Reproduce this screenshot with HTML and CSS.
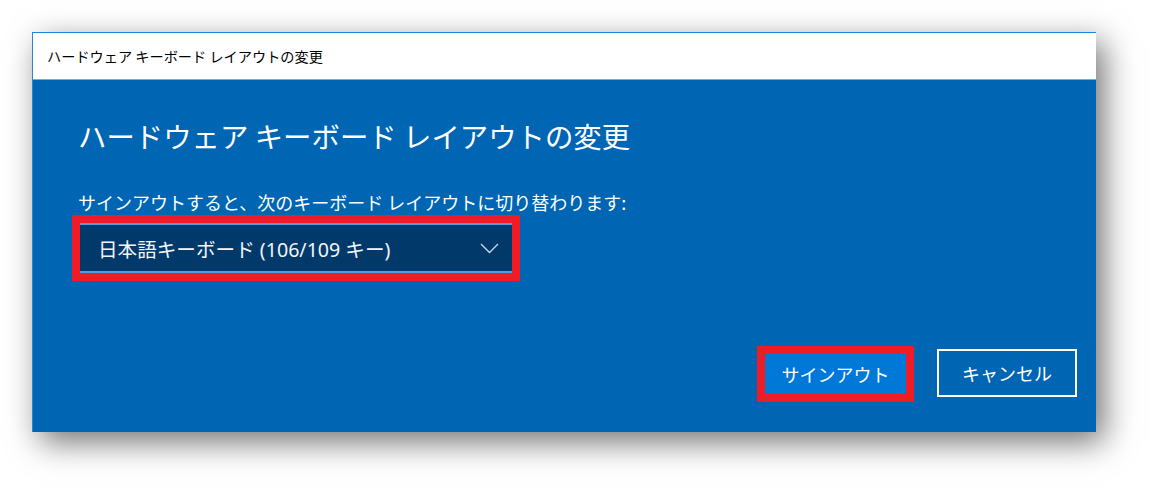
FILE: index.html
```html
<!DOCTYPE html>
<html lang="ja">
<head>
    <meta charset="UTF-8">
    <title>ハードウェア キーボード レイアウトの変更</title>
    <link rel="stylesheet" href="styles.css">
</head>
<body>
    <div class="window">
        <div class="titlebar">ハードウェア キーボード レイアウトの変更</div>
        <div class="dialog">
            <h1 class="heading">ハードウェア キーボード レイアウトの変更</h1>
            <p class="note">サインアウトすると、次のキーボード レイアウトに切り替わります:</p>
            <div class="mark select-mark">
                <div class="select">
                    <span class="select-text">日本語キーボード (106/109 キー)</span>
                    <svg class="chevron" width="19" height="11" viewBox="0 0 19 11">
                        <path d="M1 1 L9.5 9.5 L18 1" fill="none" stroke="#c9d6e3" stroke-width="1.4"/>
                    </svg>
                </div>
            </div>
            <div class="actions">
                <div class="mark">
                    <button class="btn btn-primary">サインアウト</button>
                </div>
                <button class="btn btn-outline">キャンセル</button>
            </div>
        </div>
    </div>
</body>
</html>
```

FILE: styles.css
```css
body {
    margin: 0;
    background: #ffffff;
    font-family: "Noto Sans", "Noto Sans CJK JP", sans-serif;
    width: 1161px;
    height: 498px;
    overflow: hidden;
}
.window {
    margin: 32px 0 0 32px;
    width: 1063px;
    border-top: 1px solid #1a82e0;
    border-left: 1px solid #2a86d8;
    box-shadow: 8px 10px 30px rgba(0, 0, 0, 0.55);
}
.titlebar {
    height: 47px;
    background: #ffffff;
    border-bottom: 1px solid #6aaee6;
    box-sizing: border-box;
    display: flex;
    align-items: center;
    padding-left: 14px;
    font-family: "Noto Sans CJK JP", sans-serif;
    font-size: 14.2px;
    color: #000000;
}
.dialog {
    background: #0065b3;
    height: 352px;
    box-sizing: border-box;
    padding: 36px 19px 30px 39px;
    display: flex;
    flex-direction: column;
    color: #ffffff;
}
.heading {
    margin: 0;
    padding-left: 6px;
    font-family: "Noto Sans CJK JP", sans-serif;
    font-weight: 400;
    font-size: 28.4px;
    line-height: 40px;
}
.note {
    margin: 34px 0 1px 0;
    padding-left: 6px;
    font-family: "Noto Sans CJK JP", sans-serif;
    font-size: 18px;
    line-height: 24px;
}
.mark {
    border: 8px solid #ee1c25;
}
.select-mark {
    width: 432px;
}
.select {
    height: 50px;
    box-sizing: border-box;
    background: #02396b;
    border-top: 2px solid #4f9fe0;
    border-bottom: 2px solid #4f9fe0;
    display: flex;
    align-items: center;
    justify-content: space-between;
    padding: 0 13px 0 18px;
}
.select-text {
    font-size: 19.6px;
    color: #f2f6fa;
}
.actions {
    margin-top: auto;
    display: flex;
    justify-content: flex-end;
    align-items: center;
    gap: 23px;
}
.btn {
    font-family: "Noto Sans CJK JP", sans-serif;
    font-size: 18px;
    color: #ffffff;
    cursor: pointer;
    box-sizing: border-box;
    margin: 0;
}
.btn-primary {
    display: block;
    width: 141px;
    height: 40px;
    background: #0078d7;
    border: none;
}
.btn-outline {
    width: 140px;
    height: 48px;
    background: transparent;
    border: 2px solid #ffffff;
    margin-top: -2px;
}
```
